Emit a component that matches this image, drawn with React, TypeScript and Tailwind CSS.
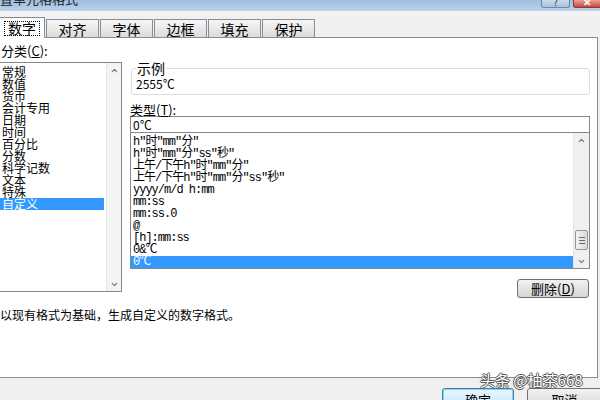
import { ChevronUp, ChevronDown } from "lucide-react";

const CATEGORIES = ["常规", "数值", "货币", "会计专用", "日期", "时间", "百分比", "分数", "科学记数", "文本", "特殊", "自定义"];

const TYPES = [
  'h"时"mm"分"',
  'h"时"mm"分"ss"秒"',
  '上午/下午h"时"mm"分"',
  '上午/下午h"时"mm"分"ss"秒"',
  "yyyy/m/d h:mm",
  "mm:ss",
  "mm:ss.0",
  "@",
  "[h]:mm:ss",
  "0&℃",
  "0℃",
];

const TABS = ["对齐", "字体", "边框", "填充", "保护"];

function ScrollArrow({ dir }: { dir: "up" | "down" }) {
  const Icon = dir === "up" ? ChevronUp : ChevronDown;
  return (
    <div className="flex h-[14px] items-center justify-center text-[#7a7a7a]">
      <Icon className="h-[9px] w-[9px]" strokeWidth={3.5} />
    </div>
  );
}

export default function App() {
  return (
    <div className="relative h-[400px] w-[600px] overflow-hidden bg-[#f0f0f0] font-['Noto_Sans_CJK_SC',sans-serif] text-black">
      {/* title bar, mostly cut off */}
      <div className="flex h-[11px] items-start justify-between overflow-hidden bg-gradient-to-b from-[#9fbfe0] to-[#bad2ec]">
        <span className="-ml-[13px] -mt-[8px] text-[13px] leading-[14px] text-[#1e1e1e]">设置单元格格式</span>
        <div className="flex items-start gap-[3px]">
          <div className="flex h-[8px] w-[29px] items-end justify-center overflow-hidden rounded-b-[3px] border border-t-0 border-[#6d87a8] bg-gradient-to-b from-[#c9daee] to-[#a9c1de] text-[10px] leading-[10px] text-[#333]">
            ?
          </div>
          <div className="flex h-[8px] w-[27px] items-end justify-center overflow-hidden rounded-bl-[3px] border border-t-0 border-r-0 border-[#8a3a30] bg-gradient-to-b from-[#e8a093] to-[#c9463d] text-[10px] font-bold leading-[10px] text-white">
            ✕
          </div>
        </div>
      </div>
      <div className="h-[6px] bg-gradient-to-b from-[#f7f4f6] to-[#f0f0f0]" />

      {/* tabs */}
      <div className="relative z-10 -mb-px flex h-[21px] items-end gap-[1px]">
        <div className="-ml-px flex h-[21px] w-[46px] items-center justify-center border border-b-0 border-[#898c95] bg-white">
          <span className="border border-dotted border-black px-[3px] text-[14px] leading-[13px]">数字</span>
        </div>
        {TABS.map((t) => (
          <div
            key={t}
            className="flex h-[19px] w-[53px] items-center justify-center border border-[#898c95] bg-gradient-to-b from-[#f6f6f6] to-[#dcdcdc] text-[14px] leading-[14px]"
          >
            {t}
          </div>
        ))}
      </div>

      {/* panel */}
      <div className="-ml-px h-[341px] w-[599px] border border-[#898c95] bg-white">
        <div className="flex">
          {/* category column */}
          <div className="w-[122px]">
            <div className="h-[24px] pl-px pt-[6px] text-[13px] leading-[14px]">
              分类(<span className="underline">C</span>):
            </div>
            <div className="-ml-px flex h-[230px] w-[123px] border border-[#828790]">
              <div className="flex-1 pt-[3px]">
                {CATEGORIES.map((c) => (
                  <div
                    key={c}
                    className={
                      c === "自定义"
                        ? "h-[12px] bg-[#3399ff] pl-[2px] text-[12px] leading-[12px] text-white"
                        : "h-[12px] pl-[2px] text-[12px] leading-[12px]"
                    }
                  >
                    {c}
                  </div>
                ))}
              </div>
              <div className="ml-[2px] flex w-[15px] flex-col justify-between border-l border-[#e6e6e6] bg-[#f4f4f4]">
                <ScrollArrow dir="up" />
                <ScrollArrow dir="down" />
              </div>
            </div>
          </div>

          {/* type column */}
          <div className="ml-[8px] w-[460px]">
            <fieldset className="ml-px mt-[23px] rounded-[3px] border border-[#d5dfe5] px-[3px]">
              <legend className="ml-[1px] px-[1px] text-[14px] leading-[14px]">示例</legend>
              <div className="h-[19px] pl-[1px] pt-[3px] text-[12px] leading-[12px]">2555℃</div>
            </fieldset>
            <div className="h-[21px] pt-[8px] text-[13px] leading-[13px]">
              类型(<span className="underline">T</span>):
            </div>
            <div className="h-[17px] border border-[#828790] pl-[2px] text-[12px] leading-[15px]">0℃</div>
            <div className="-mt-px flex h-[137px] border border-[#828790]">
              <div className="flex-1 pt-[3px] font-['Liberation_Mono','Noto_Sans_CJK_SC',monospace] text-[12px] tracking-[-1px]">
                {TYPES.map((t, i) => (
                  <div
                    key={t}
                    className={
                      i === TYPES.length - 1
                        ? "h-[12px] bg-[#3399ff] pl-[2px] leading-[12px] text-white"
                        : "h-[12px] pl-[2px] leading-[12px]"
                    }
                  >
                    {t}
                  </div>
                ))}
              </div>
              <div className="flex w-[16px] flex-col border-l border-[#e6e6e6] bg-[#f0f0f0]">
                <ScrollArrow dir="up" />
                <div className="flex flex-1 flex-col justify-end pb-[4px]">
                  <div className="mx-auto flex h-[20px] w-[13px] flex-col items-center justify-center gap-[2px] rounded-[2px] border border-[#959595] bg-gradient-to-r from-[#f2f2f2] to-[#dadada]">
                    <div className="h-px w-[6px] bg-[#6b6b6b]" />
                    <div className="h-px w-[6px] bg-[#6b6b6b]" />
                    <div className="h-px w-[6px] bg-[#6b6b6b]" />
                  </div>
                </div>
                <ScrollArrow dir="down" />
              </div>
            </div>
            <div className="mt-[10px] flex justify-end">
              <button className="mr-px flex h-[19px] w-[72px] items-center justify-center rounded-[3px] border border-[#707070] bg-gradient-to-b from-[#f2f2f2] to-[#d6d6d6] text-[13px] leading-[13px]">
                删除(<span className="underline">D</span>)
              </button>
            </div>
          </div>
        </div>
        <div className="mt-[10px] text-[12px] leading-[14px]">以现有格式为基础，生成自定义的数字格式。</div>
      </div>

      {/* bottom buttons */}
      <div className="-mr-[2px] mt-[10px] flex justify-end gap-[13px]">
        <button className="flex h-[23px] w-[72px] items-start justify-center rounded-[3px] border border-[#3c7fb1] bg-gradient-to-b from-[#eaf6fd] to-[#bee6fd] pt-[4px] text-[13px] leading-[14px] shadow-[inset_0_0_0_1px_#8fd2f5]">
          确定
        </button>
        <button className="flex h-[23px] w-[75px] items-start justify-center rounded-[3px] border border-[#707070] bg-gradient-to-b from-[#f2f2f2] to-[#d6d6d6] pt-[4px] text-[13px] leading-[14px]">
          取消
        </button>
      </div>

      {/* watermark */}
      <div className="absolute left-[480px] top-[371px] text-[15px] leading-[17px] text-white [text-shadow:1px_0_0_#555,-1px_0_0_#555,0_1px_0_#555,0_-1px_0_#555]">
        头条 @柚茶668
      </div>
    </div>
  );
}
